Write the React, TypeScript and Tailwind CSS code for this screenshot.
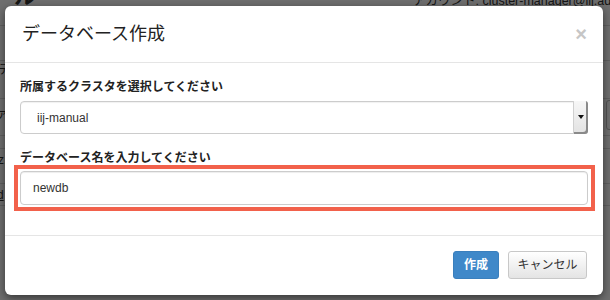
import React from 'react';

// Dimmed page behind the dialog — only edges of it are visible.
const BackgroundPage: React.FC = () => (
    <div className="relative w-[610px] h-[300px] bg-white text-[#333]">
        <div className="flex items-start justify-between h-[26px] border-b border-[#ddd] overflow-hidden">
            <div className="-ml-[8px] -mt-[14px] text-[22px] font-bold leading-[22px]">ール</div>
            <div className="w-[197px] -mt-[6px] text-[12.5px] leading-[14px] whitespace-nowrap overflow-hidden">
                アカウント: cluster-manager@iij.ad.jp
            </div>
        </div>
        <div className="flex flex-col text-[12px]">
            <div className="h-[35px] border-b border-[#ddd]" />
            <div className="h-[38px] border-b border-[#ddd] -ml-[2px]">テ</div>
            <div className="h-[37px] border-b border-[#ddd] flex items-start">
                <span className="-ml-[4px] mt-[6px]">ァ</span>
                <div className="ml-auto mt-[1px] w-[10px] h-[30px] border border-[#bbb] rounded-[3px] -mr-[6px]" />
            </div>
            <div className="h-[13px] border-b border-[#ddd]" />
            <div className="h-[35px] border-b border-[#ddd] pt-[2px] -ml-[2px]">z.</div>
            <div className="h-[22px] border-b border-[#ddd] pt-[2px] -ml-[3px] underline">d</div>
        </div>
    </div>
);

export default function App() {
    return (
        <div
            className="relative w-[610px] h-[300px] overflow-hidden"
            style={{ fontFamily: '"Liberation Sans", "Noto Sans CJK JP", sans-serif' }}
        >
            <BackgroundPage />
            <div className="absolute inset-0 bg-black/[0.57]" />

            {/* Modal */}
            <div className="absolute inset-0 pl-[5px] pt-[6px]">
                <div className="w-[598px] h-[289px] bg-white rounded-[6px] shadow-[0_3px_9px_rgba(0,0,0,0.5)] flex flex-col">
                    {/* Header */}
                    <div className="h-[57px] px-[15px] flex items-center justify-between border-b border-[#e5e5e5]">
                        <h4 className="pl-[2px] text-[18px] text-[#222] leading-[20px]">データベース作成</h4>
                        <span className="text-[20px] leading-[20px] font-bold text-[#c6c6c6] mr-px -mt-[1px]">×</span>
                    </div>

                    {/* Body */}
                    <div className="px-[15px] pt-[16px] pb-[30px]">
                        <label className="block text-[12px] leading-[17px] font-bold text-[#222] mb-[5px]">
                            所属するクラスタを選択してください
                        </label>
                        <div className="flex h-[33px] border border-[#ccc] rounded-[4px] shadow-[inset_0_1px_1px_rgba(0,0,0,0.06)]">
                            <div className="flex-1 flex items-center pl-[16px] text-[12px] text-[#333]">iij-manual</div>
                            <div className="w-[15px] -my-px -mr-px flex items-center justify-center bg-gradient-to-b from-[#f7f7f7] to-[#e2e2e2] border-l border-[#d0d0d0] rounded-r-[3px] shadow-[inset_-2px_-2px_0_#8a8a8a]">
                                <svg width="6" height="4" viewBox="0 0 6 4" className="-ml-[1px] mb-[1px]">
                                    <path d="M0 0 L6 0 L3 4 Z" fill="#111" />
                                </svg>
                            </div>
                        </div>

                        <label className="block mt-[16px] text-[12px] leading-[17px] font-bold text-[#222] mb-[4px]">
                            データベース名を入力してください
                        </label>
                        <div className="relative">
                            <div className="absolute -left-[6px] -top-[6px] -right-[7px] -bottom-[6px] border-[4px] border-[#f2614b]" />
                            <div className="relative h-[34px] flex items-center pl-[12px] border border-[#ccc] rounded-[4px] bg-white shadow-[inset_0_1px_1px_rgba(0,0,0,0.075)] text-[12px] text-[#333]">
                                newdb
                            </div>
                        </div>
                    </div>

                    {/* Footer */}
                    <div className="flex-1 border-t border-[#e5e5e5] pt-[15px] pr-[16px] flex justify-end items-start gap-[9px]">
                        <button className="w-[46px] h-[28px] rounded-[3px] bg-[#3f88c9] border border-[#3a7fbd] text-white text-[12px] font-bold">
                            作成
                        </button>
                        <button className="w-[79px] h-[28px] rounded-[3px] bg-gradient-to-b from-white to-[#e4e4e4] border border-[#c8c8c8] text-[#333] text-[12px]">
                            キャンセル
                        </button>
                    </div>
                </div>
            </div>
        </div>
    );
}
